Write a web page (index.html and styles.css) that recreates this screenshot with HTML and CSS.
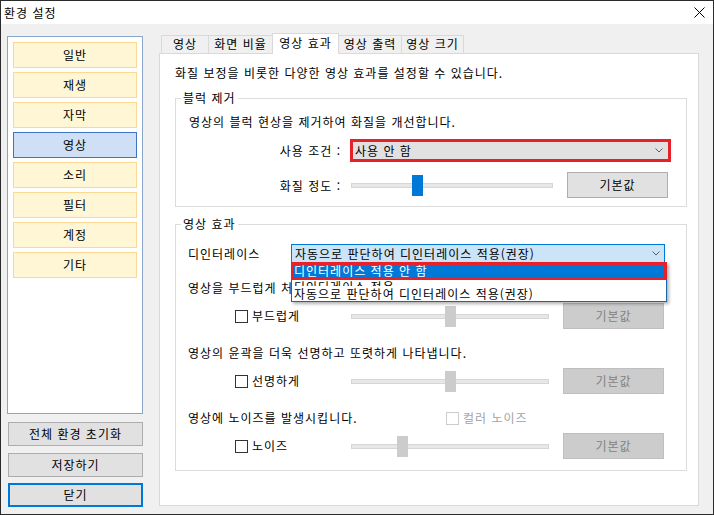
FILE: index.html
```html
<!DOCTYPE html>
<html lang="ko">
<head>
  <meta charset="UTF-8" />
  <title>환경 설정</title>
  <link rel="stylesheet" href="styles.css">
</head>
<body>
  <div class="window">
    <div class="titlebar">
      <span class="title">환경 설정</span>
      <svg class="close-icon" width="11" height="11" viewBox="0 0 11 11">
        <path d="M0.5 0.5 L10.5 10.5 M10.5 0.5 L0.5 10.5" stroke="#000" stroke-width="1" fill="none"/>
      </svg>
    </div>

    <div class="main">
      <div class="sidebar">
        <div class="category-list">
          <button class="category">일반</button>
          <button class="category">재생</button>
          <button class="category">자막</button>
          <button class="category selected">영상</button>
          <button class="category">소리</button>
          <button class="category">필터</button>
          <button class="category">계정</button>
          <button class="category">기타</button>
        </div>
        <button class="cmd-button reset">전체 환경 초기화</button>
        <button class="cmd-button save">저장하기</button>
        <button class="cmd-button close default">닫기</button>
      </div>

      <div class="tab-area">
        <div class="tabs">
          <div class="tab t1">영상</div>
          <div class="tab t2">화면 비율</div>
          <div class="tab t3 active">영상 효과</div>
          <div class="tab t4">영상 출력</div>
          <div class="tab t5">영상 크기</div>
        </div>

        <div class="tab-panel">
          <p class="panel-desc">화질 보정을 비롯한 다양한 영상 효과를 설정할 수 있습니다.</p>

          <fieldset class="group block-group">
            <legend>블럭 제거</legend>
            <p class="group-desc">영상의 블럭 현상을 제거하여 화질을 개선합니다.</p>
            <div class="setting-row combo-row">
              <span class="row-label">사용 조건 :</span>
              <div class="combo marked">
                <span>사용 안 함</span>
                <svg class="chevron" width="8" height="5" viewBox="0 0 8 5"><path d="M0.5 0.5 L4 4 L7.5 0.5" stroke="#606060" fill="none"/></svg>
              </div>
            </div>
            <div class="setting-row slider-row">
              <span class="row-label">화질 정도 :</span>
              <div class="slider wide">
                <div class="track"></div>
                <div class="thumb active-thumb" style="left: 61px"></div>
              </div>
              <button class="push-button">기본값</button>
            </div>
          </fieldset>

          <fieldset class="group effect-group">
            <legend>영상 효과</legend>
            <div class="setting-row deint-row">
              <span class="deint-label">디인터레이스</span>
              <div class="combo-wrap">
                <div class="combo focused">
                  <span>자동으로 판단하여 디인터레이스 적용(권장)</span>
                  <svg class="chevron" width="8" height="5" viewBox="0 0 8 5"><path d="M0.5 0.5 L4 4 L7.5 0.5" stroke="#606060" fill="none"/></svg>
                </div>
                <div class="dropdown">
                  <div class="option highlighted">디인터레이스 적용 안 함</div>
                  <div class="option squeezed">디인터레이스 적용</div>
                  <div class="option">자동으로 판단하여 디인터레이스 적용(권장)</div>
                </div>
              </div>
            </div>

            <div class="effect">
              <p class="effect-desc">영상을 부드럽게 처리합니다.</p>
              <div class="check-row">
                <label class="check"><span class="box"></span>부드럽게</label>
                <div class="slider">
                  <div class="track"></div>
                  <div class="thumb" style="left: 94px"></div>
                </div>
                <button class="push-button disabled">기본값</button>
              </div>
            </div>

            <div class="effect">
              <p class="effect-desc">영상의 윤곽을 더욱 선명하고 또렷하게 나타냅니다.</p>
              <div class="check-row">
                <label class="check"><span class="box"></span>선명하게</label>
                <div class="slider">
                  <div class="track"></div>
                  <div class="thumb" style="left: 94px"></div>
                </div>
                <button class="push-button disabled">기본값</button>
              </div>
            </div>

            <div class="effect">
              <div class="effect-desc noise-desc">
                <span class="noise-text">영상에 노이즈를 발생시킵니다.</span>
                <label class="check off"><span class="box"></span>컬러 노이즈</label>
              </div>
              <div class="check-row">
                <label class="check"><span class="box"></span>노이즈</label>
                <div class="slider">
                  <div class="track"></div>
                  <div class="thumb" style="left: 46px"></div>
                </div>
                <button class="push-button disabled">기본값</button>
              </div>
            </div>
          </fieldset>
        </div>
      </div>
    </div>
  </div>
</body>
</html>
```

FILE: styles.css
```css
* {
  box-sizing: border-box;
}

body {
  margin: 0;
  font-family: "Noto Sans CJK KR", "Noto Sans", sans-serif;
  font-size: 12px;
  letter-spacing: 1px;
  color: #000;
  background: #fff;
}

button {
  font: inherit;
  letter-spacing: inherit;
  color: inherit;
  padding: 0;
}

.window {
  width: 714px;
  height: 515px;
  border: 1px solid #2b2b2b;
  background: #f0f0f0;
  display: flex;
  flex-direction: column;
}

.titlebar {
  height: 23px;
  background: #fff;
  display: flex;
  align-items: center;
  justify-content: space-between;
  padding: 0 8px 0 3px;
  line-height: 16px;
}

/* left column */
.main {
  flex: 1;
  display: flex;
  padding-left: 6px;
}

.sidebar {
  width: 136px;
  display: flex;
  flex-direction: column;
  padding-top: 12px;
}

.category-list {
  height: 378px;
  border: 1px solid #8ba5c8;
  background: #fff;
  padding: 5px;
  display: flex;
  flex-direction: column;
  gap: 4px;
}

.category {
  height: 26px;
  border: 1px solid #fdd891;
  background: #fff6d6;
  line-height: 16px;
}

.category.selected {
  border-color: #3d74c6;
  background: #cfdff5;
}

.cmd-button {
  width: 135px;
  height: 24px;
  margin-left: 1px;
  border: 1px solid #adadad;
  background: #e1e1e1;
  line-height: 16px;
}

.cmd-button.reset { margin-top: 8px; }
.cmd-button.save { margin-top: 7px; }
.cmd-button.close { margin-top: 6px; }

.cmd-button.default {
  border: 2px solid #0078d7;
}

/* tabs */
.tab-area {
  width: 540px;
  margin-left: 16px;
  padding-top: 9px;
}

.tabs {
  display: flex;
  align-items: flex-end;
  height: 20px;
  padding-left: 2px;
}

.tab {
  height: 18px;
  border: 1px solid #d9d9d9;
  border-bottom: none;
  background: #f0f0f0;
  margin-right: -1px;
  text-align: center;
  line-height: 16px;
}

.tab.active {
  height: 21px;
  background: #fff;
  margin-bottom: -1px;
  position: relative;
  z-index: 1;
  line-height: 18px;
}

.t1 { width: 48px; }
.t2 { width: 65px; }
.t3 { width: 67px; }
.t4 { width: 64px; }
.t5 { width: 63px; }

.tab-panel {
  height: 453px;
  border: 1px solid #d9d9d9;
  background: #fff;
  padding: 11px 11px 0 15px;
}

.panel-desc {
  margin: 0;
  line-height: 16px;
}

/* group boxes */
.group {
  margin: 10px 0 0;
  padding: 9px 12px 8px 12px;
  border: 1px solid #dcdcdc;
  min-width: 0;
}

.group legend {
  padding: 0 2px;
  margin-left: -7px;
  line-height: 14px;
}

.group-desc {
  margin: 0 0 0 1px;
  line-height: 16px;
}

.setting-row {
  display: flex;
  align-items: center;
}

.combo-row {
  margin-top: 9px;
}

.slider-row {
  margin-top: 10px;
}

.row-label {
  width: 153px;
  text-align: right;
  margin-right: 9px;
}

.combo {
  display: flex;
  align-items: center;
  justify-content: space-between;
  line-height: 14px;
}

.combo.marked {
  width: 321px;
  height: 23px;
  border: 3px solid #e8202a;
  background: #e1e1e1;
  padding: 0 5px 0 2px;
}

.slider {
  position: relative;
  width: 198px;
  height: 21px;
}

.slider.wide {
  width: 202px;
  margin-left: 1px;
}

.track {
  position: absolute;
  left: 0;
  right: 0;
  top: 8px;
  height: 5px;
  background: #e7e7e7;
  border: 1px solid #d6d6d6;
}

.thumb {
  position: absolute;
  top: 0;
  width: 11px;
  height: 21px;
  background: #cccccc;
}

.thumb.active-thumb {
  background: #0078d7;
}

.push-button {
  width: 101px;
  height: 26px;
  margin-left: 14px;
  border: 1px solid #adadad;
  background: #e1e1e1;
  line-height: 16px;
}

.push-button.disabled {
  background: #cccccc;
  border-color: #bfbfbf;
  color: #838383;
}

.effect-group {
  padding-bottom: 11px;
}

.deint-row {
  margin-top: 4px;
  line-height: 16px;
}

.deint-label {
  width: 103px;
}

.combo-wrap {
  position: relative;
}

.combo.focused {
  width: 374px;
  height: 19px;
  border: 1px solid #0078d7;
  background: #cce4f7;
  padding: 0 4px 0 3px;
}

.dropdown {
  position: absolute;
  top: 18px;
  left: 0;
  width: 376px;
  background: #fff;
  border: 1px solid #1565b0;
  box-shadow: 2px 2px 3px rgba(0, 0, 0, 0.3);
  z-index: 2;
}

.option {
  padding-left: 2px;
  line-height: 15px;
  height: 15px;
  white-space: nowrap;
}

.option.highlighted {
  margin: -1px -1px 0 -1px;
  height: 18px;
  border: 3px solid #e8202a;
  background: #0078d7;
  color: #fff;
  line-height: 12px;
  padding-left: 0;
}

.option.squeezed {
  height: 6px;
  line-height: 14px;
  overflow: hidden;
}

.effect-desc {
  margin: 17px 0 0;
  line-height: 16px;
}

.effect + .effect .effect-desc {
  margin-top: 16px;
}

.noise-desc {
  display: flex;
  align-items: center;
}

.noise-text {
  width: 258px;
}

.check-row {
  display: flex;
  align-items: center;
  margin-top: 7px;
}

.check {
  display: flex;
  align-items: center;
  line-height: 16px;
}

.check-row .check {
  width: 116px;
  margin-left: 47px;
}

.box {
  width: 13px;
  height: 13px;
  border: 1px solid #333;
  background: #fff;
  margin-right: 4px;
}

.check.off {
  color: #a3a3a3;
}

.check.off .box {
  border-color: #cccccc;
}
```
